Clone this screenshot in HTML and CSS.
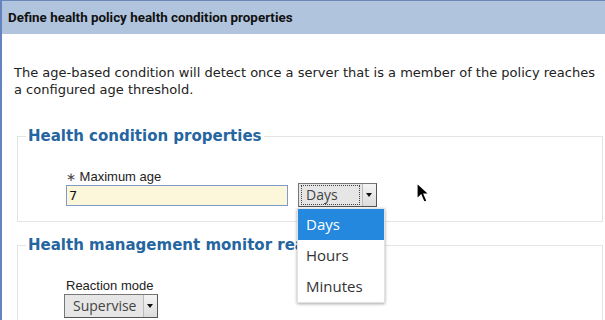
FILE: index.html
```html
<!DOCTYPE html>
<html lang="en">
<head>
<title>Health condition properties</title>
<meta charset="utf-8">
<link rel="stylesheet" href="styles.css">
</head>
<body>

<div class="panel">
  <div class="panel-title">Define health policy health condition properties</div>
  <div class="panel-body">
    <p class="intro">The age-based condition will detect once a server that is a member of the policy reaches a configured age threshold.</p>

    <fieldset class="group">
      <legend>Health condition properties</legend>
      <div class="field-row">
        <div class="field">
          <label for="maxAge"><span class="req">&lowast;</span> Maximum age</label>
          <input type="text" id="maxAge" class="text-input" value="7">
        </div>
        <div class="select-wrap">
          <div class="fake-select unit-select">
            <span class="select-value focused">Days</span>
            <span class="select-arrow"></span>
          </div>
          <ul class="dropdown">
            <li class="selected">Days</li>
            <li>Hours</li>
            <li>Minutes</li>
          </ul>
        </div>
      </div>
    </fieldset>

    <fieldset class="group group-low">
      <legend>Health management monitor reaction</legend>
      <div class="field">
        <label>Reaction mode</label>
        <div class="fake-select mode-select">
          <span class="select-value">Supervise</span>
          <span class="select-arrow"></span>
        </div>
      </div>
    </fieldset>
  </div>
</div>

<svg class="cursor" width="16" height="22" viewBox="0 0 16 22">
  <path d="M1 1 L1 17 L5 13 L8 20 L11 19 L8 12 L13 12 Z" fill="#000" stroke="#fff" stroke-width="1.2"/>
</svg>

</body>
</html>
```

FILE: styles.css
```css
* {
  box-sizing: border-box;
}

body {
  margin: 0;
  background: #fff;
  font-family: "DejaVu Sans", sans-serif;
  color: #222;
  overflow: hidden;
}

/* Panel frame */
.panel {
  border-top: 1px solid #6d87b8;
  border-left: 2px solid #6382c0;
  height: 320px;
}

.panel-title {
  background-color: #b0c4de;
  height: 33px;
  padding: 0 6px;
  display: flex;
  align-items: center;
  font-family: Roboto, "Liberation Sans", sans-serif;
  font-weight: bold;
  font-size: 13.4px;
  color: #111;
}

.panel-body {
  padding: 30px 2px 0 12px;
}

.intro {
  margin: 0;
  font-size: 13px;
  line-height: 17px;
  color: #222;
}

/* Groups */
.group {
  margin: 29px 0 0 3px;
  padding: 23px 8px 15px 8px;
  border: 1px solid #e4e4e4;
  min-width: 0;
}

.group + .group {
  margin-top: 14px;
}

.group legend {
  padding: 0 2px;
  font-size: 15px;
  font-weight: bold;
  color: #2565a0;
  line-height: 19px;
  white-space: nowrap;
}

.field-row {
  display: flex;
  align-items: flex-end;
  gap: 10px;
  padding-left: 40px;
}

.field label {
  display: block;
  font-family: "Liberation Sans", Arial, sans-serif;
  font-size: 13px;
  color: #222;
  margin-bottom: 1px;
}

.req {
  color: #444;
  font-size: 12px;
}

.text-input {
  display: block;
  width: 222px;
  height: 21px;
  padding: 1px 2px;
  border: 1px solid #7f9cc9;
  background-color: #fcf6da;
  font-family: "DejaVu Sans", sans-serif;
  font-size: 13px;
  color: #111;
}

/* Select boxes */
.select-wrap {
  position: relative;
}

.fake-select {
  display: flex;
  align-items: center;
  height: 24px;
  border: 1px solid #555;
  border-top-color: #777;
  border-left-color: #777;
  background-color: #e6e6e6;
  font-family: "Open Sans", sans-serif;
  font-size: 14px;
  color: #444;
}

.unit-select {
  width: 79px;
  margin-bottom: -1px;
}

.select-value {
  flex: 1;
  min-width: 0;
  padding: 0 4px;
  margin: 0 2px;
  line-height: 18px;
  border: 1px solid transparent;
  white-space: nowrap;
  overflow: hidden;
}

.select-value.focused {
  border: 1px dotted #444;
}

.select-arrow {
  width: 14px;
  flex: none;
  align-self: stretch;
  border-left: 1px solid #bbb;
  background: linear-gradient(#f4f4f4, #dcdcdc);
  position: relative;
}

.select-arrow::after {
  content: "";
  position: absolute;
  left: 3px;
  top: 9px;
  border-left: 3.5px solid transparent;
  border-right: 3.5px solid transparent;
  border-top: 4px solid #111;
}

.mode-select {
  width: 94px;
  margin-left: -2px;
}

.mode-select .select-value {
  padding: 0 4px 0 5px;
  font-size: 14px;
}

.dropdown {
  position: absolute;
  left: -1px;
  top: 25px;
  width: 88px;
  margin: 0;
  padding: 0;
  list-style: none;
  background: #fff;
  border: 1px solid #e2e2e2;
  box-shadow: 0 1px 3px rgba(0, 0, 0, 0.35);
  font-family: "Open Sans", sans-serif;
  font-size: 15px;
  color: #333;
  z-index: 2;
}

.dropdown li {
  height: 31px;
  line-height: 31px;
  padding-left: 8px;
}

.dropdown li.selected {
  background-color: #2388de;
  color: #fff;
}

.group .field {
  padding-left: 40px;
}

.field-row .field {
  padding-left: 0;
}

.cursor {
  position: absolute;
  left: 416px;
  top: 182px;
}
```
